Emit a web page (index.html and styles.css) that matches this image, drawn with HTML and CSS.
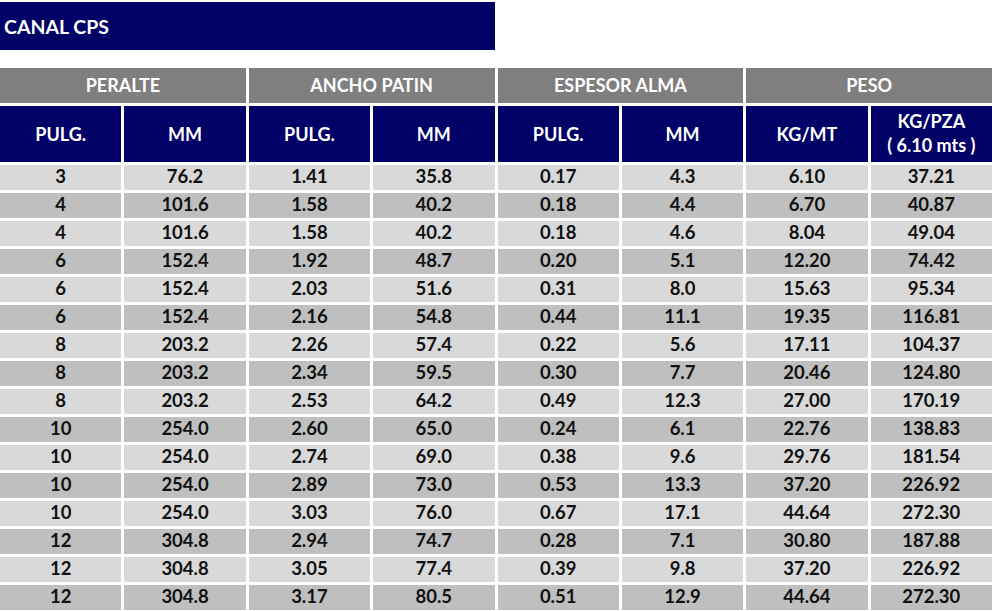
FILE: index.html
```html
<!DOCTYPE html>
<html lang="es">
<head>
<meta charset="utf-8">
<title>Canal CPS</title>
<link rel="stylesheet" href="styles.css">
</head>
<body>
<div class="title">CANAL CPS</div>
<div class="grid">
  <div class="group">PERALTE</div>
  <div class="group">ANCHO PATIN</div>
  <div class="group">ESPESOR ALMA</div>
  <div class="group">PESO</div>
  <div class="sub">PULG.</div><div class="sub">MM</div>
  <div class="sub">PULG.</div><div class="sub">MM</div>
  <div class="sub">PULG.</div><div class="sub">MM</div>
  <div class="sub">KG/MT</div><div class="sub two">KG/PZA<br>( 6.10 mts )</div>

  <div class="c l">3</div><div class="c l">76.2</div><div class="c l">1.41</div><div class="c l">35.8</div><div class="c l">0.17</div><div class="c l">4.3</div><div class="c l">6.10</div><div class="c l">37.21</div>
  <div class="c d">4</div><div class="c d">101.6</div><div class="c d">1.58</div><div class="c d">40.2</div><div class="c d">0.18</div><div class="c d">4.4</div><div class="c d">6.70</div><div class="c d">40.87</div>
  <div class="c l">4</div><div class="c l">101.6</div><div class="c l">1.58</div><div class="c l">40.2</div><div class="c l">0.18</div><div class="c l">4.6</div><div class="c l">8.04</div><div class="c l">49.04</div>
  <div class="c d">6</div><div class="c d">152.4</div><div class="c d">1.92</div><div class="c d">48.7</div><div class="c d">0.20</div><div class="c d">5.1</div><div class="c d">12.20</div><div class="c d">74.42</div>
  <div class="c l">6</div><div class="c l">152.4</div><div class="c l">2.03</div><div class="c l">51.6</div><div class="c l">0.31</div><div class="c l">8.0</div><div class="c l">15.63</div><div class="c l">95.34</div>
  <div class="c d">6</div><div class="c d">152.4</div><div class="c d">2.16</div><div class="c d">54.8</div><div class="c d">0.44</div><div class="c d">11.1</div><div class="c d">19.35</div><div class="c d">116.81</div>
  <div class="c l">8</div><div class="c l">203.2</div><div class="c l">2.26</div><div class="c l">57.4</div><div class="c l">0.22</div><div class="c l">5.6</div><div class="c l">17.11</div><div class="c l">104.37</div>
  <div class="c d">8</div><div class="c d">203.2</div><div class="c d">2.34</div><div class="c d">59.5</div><div class="c d">0.30</div><div class="c d">7.7</div><div class="c d">20.46</div><div class="c d">124.80</div>
  <div class="c l">8</div><div class="c l">203.2</div><div class="c l">2.53</div><div class="c l">64.2</div><div class="c l">0.49</div><div class="c l">12.3</div><div class="c l">27.00</div><div class="c l">170.19</div>
  <div class="c d">10</div><div class="c d">254.0</div><div class="c d">2.60</div><div class="c d">65.0</div><div class="c d">0.24</div><div class="c d">6.1</div><div class="c d">22.76</div><div class="c d">138.83</div>
  <div class="c l">10</div><div class="c l">254.0</div><div class="c l">2.74</div><div class="c l">69.0</div><div class="c l">0.38</div><div class="c l">9.6</div><div class="c l">29.76</div><div class="c l">181.54</div>
  <div class="c d">10</div><div class="c d">254.0</div><div class="c d">2.89</div><div class="c d">73.0</div><div class="c d">0.53</div><div class="c d">13.3</div><div class="c d">37.20</div><div class="c d">226.92</div>
  <div class="c l">10</div><div class="c l">254.0</div><div class="c l">3.03</div><div class="c l">76.0</div><div class="c l">0.67</div><div class="c l">17.1</div><div class="c l">44.64</div><div class="c l">272.30</div>
  <div class="c d">12</div><div class="c d">304.8</div><div class="c d">2.94</div><div class="c d">74.7</div><div class="c d">0.28</div><div class="c d">7.1</div><div class="c d">30.80</div><div class="c d">187.88</div>
  <div class="c l">12</div><div class="c l">304.8</div><div class="c l">3.05</div><div class="c l">77.4</div><div class="c l">0.39</div><div class="c l">9.8</div><div class="c l">37.20</div><div class="c l">226.92</div>
  <div class="c d">12</div><div class="c d">304.8</div><div class="c d">3.17</div><div class="c d">80.5</div><div class="c d">0.51</div><div class="c d">12.9</div><div class="c d">44.64</div><div class="c d">272.30</div>
</div>
</body>
</html>
```
FILE: styles.css
```css
html, body {
  margin: 0;
  padding: 0;
  background: #ffffff;
}
body {
  font-family: Lato, "Liberation Sans", sans-serif;
  font-weight: 700;
  overflow: hidden;
}
.title {
  margin-top: 2px;
  width: 495px;
  height: 48px;
  box-sizing: border-box;
  padding-left: 4px;
  display: flex;
  align-items: center;
  background: #000066;
  color: #ffffff;
  font-size: 19.5px;
}
.grid {
  margin-top: 18px;
  display: grid;
  grid-template-columns: repeat(8, 1fr);
  grid-template-rows: 35px 56px;
  grid-auto-rows: 25px;
  gap: 3px;
}
.group {
  grid-column: span 2;
  background: #7f7f7f;
  color: #ffffff;
  font-size: 18px;
  display: flex;
  align-items: center;
  justify-content: center;
  padding-bottom: 2px;
}
.sub {
  background: #000066;
  color: #ffffff;
  font-size: 18px;
  display: flex;
  align-items: center;
  justify-content: center;
  text-align: center;
}
.two {
  line-height: 24px;
  padding-bottom: 3px;
}
.c {
  display: flex;
  align-items: center;
  justify-content: center;
  font-size: 18.5px;
  color: #111111;
  padding-bottom: 4px;
}
.l { background: #d9d9d9; }
.d { background: #bfbfbf; }
```
